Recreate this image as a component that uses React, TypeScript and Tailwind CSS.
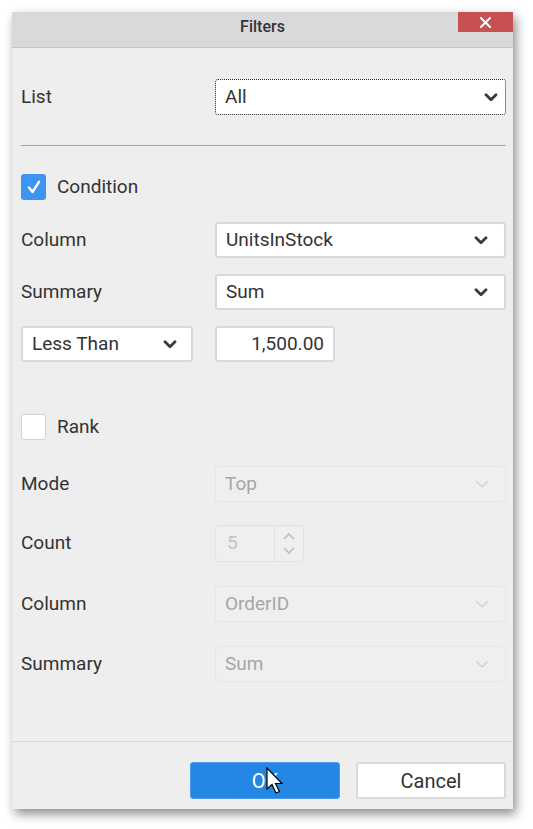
import React from "react";

const Chevron = ({ color = "#3a3a3a", w = 2.6 }: { color?: string; w?: number }) => (
  <svg width="14" height="9" viewBox="0 0 14 9" className="shrink-0">
    <polyline points="2,1.8 7,6.8 12,1.8" fill="none" stroke={color} strokeWidth={w} strokeLinecap="round" strokeLinejoin="round" />
  </svg>
);

const Select = ({ value, disabled = false, focused = false, chevPad = "pr-[16px]" }: { value: string; disabled?: boolean; focused?: boolean; chevPad?: string }) => (
  <div
    className={
      "flex h-[36px] flex-1 items-center justify-between rounded-[3px] pl-[9px] " +
      chevPad +
      " " +
      (focused
        ? "border border-dotted border-[#222] bg-white"
        : disabled
        ? "border border-[#e6e6e6] bg-[#efefef]"
        : "border-2 border-[#d9d9d9] bg-white")
    }
  >
    <span className={disabled ? "text-[#a6a6a6]" : "text-[#333]"}>{value}</span>
    <Chevron color={disabled ? "#d6d6d6" : "#3a3a3a"} w={disabled ? 1.8 : 2.8} />
  </div>
);

const Row = ({ label, children, className = "" }: { label: string; children: React.ReactNode; className?: string }) => (
  <div className={"flex items-center " + className}>
    <div className="w-[194px] shrink-0 text-[#333]">{label}</div>
    {children}
  </div>
);

export default function App() {
  return (
    <div className="h-[829px] w-[533px] bg-white pl-[12px] pt-[12px]" style={{ fontFamily: "Roboto, 'Noto Sans', sans-serif" }}>
      <div className="relative flex h-[797px] w-[501px] flex-col bg-[#eeeeee] text-[19px] shadow-[3px_5px_10px_rgba(0,0,0,0.45)]">
        {/* Title bar */}
        <div className="relative flex h-[36px] shrink-0 items-center justify-center border-b border-[#c4c4c4] bg-[#d9d8da] pb-[6px]">
          <span className="text-[16px] font-medium text-[#333]">Filters</span>
          <div className="absolute right-0 top-0 flex h-[20px] w-[55px] items-center justify-center bg-[#c75050]">
            <svg width="11" height="11" viewBox="0 0 11 11">
              <path d="M1 1 L10 10 M10 1 L1 10" stroke="white" strokeWidth="2" strokeLinecap="square" />
            </svg>
          </div>
        </div>

        {/* Body */}
        <div className="flex flex-1 flex-col pl-[9px] pr-[7px] pt-[31px]">
          <Row label="List">
            <Select value="All" focused chevPad="pr-[7px]" />
          </Row>
          <div className="mt-[30px] h-px bg-[#a3a3a3]" />

          <div className="mt-[28px] flex h-[26px] items-center">
            <div className="flex h-[26px] w-[25px] items-center justify-center rounded-[3px] bg-[#3e94f3]">
              <svg width="14" height="14" viewBox="0 0 14 14">
                <polyline points="2,7.5 5.5,12 12,1.8" fill="none" stroke="white" strokeWidth="2.4" strokeLinecap="round" strokeLinejoin="round" />
              </svg>
            </div>
            <span className="ml-[11px] text-[#333]">Condition</span>
          </div>

          <Row label="Column" className="mt-[22px]">
            <Select value="UnitsInStock" />
          </Row>
          <Row label="Summary" className="mt-[16px]">
            <Select value="Sum" />
          </Row>
          <div className="mt-[16px] flex items-center">
            <div className="flex h-[36px] w-[172px] items-center justify-between rounded-[3px] border-2 border-[#d9d9d9] bg-white pl-[9px] pr-[14px]">
              <span className="text-[#333]">Less Than</span>
              <Chevron w={2.8} />
            </div>
            <div className="ml-[22px] flex h-[36px] w-[120px] items-center justify-end rounded-[3px] border-2 border-[#d9d9d9] bg-white pr-[9px]">
              <span className="text-[#333]">1,500.00</span>
            </div>
          </div>

          <div className="mt-[52px] flex h-[26px] items-center">
            <div className="h-[26px] w-[25px] rounded-[3px] border border-[#d2d2d2] bg-white" />
            <span className="ml-[11px] text-[#333]">Rank</span>
          </div>

          <Row label="Mode" className="mt-[26px]">
            <Select value="Top" disabled />
          </Row>
          <Row label="Count" className="mt-[23px]">
            <div className="flex h-[37px] w-[89px] items-stretch rounded-[3px] border border-[#e3e3e3] bg-[#efefef]">
              <div className="flex flex-1 items-center pl-[11px] text-[#c2c2c2]">5</div>
              <div className="flex w-[29px] flex-col items-center justify-center gap-[7px] border-l border-[#e0e0e0]">
                <svg width="12" height="7" viewBox="0 0 12 7">
                  <polyline points="1,6 6,1 11,6" fill="none" stroke="#bdbdbd" strokeWidth="1.6" />
                </svg>
                <svg width="12" height="7" viewBox="0 0 12 7">
                  <polyline points="1,1 6,6 11,1" fill="none" stroke="#bdbdbd" strokeWidth="1.6" />
                </svg>
              </div>
            </div>
          </Row>
          <Row label="Column" className="mt-[24px]">
            <Select value="OrderID" disabled />
          </Row>
          <Row label="Summary" className="mt-[24px]">
            <Select value="Sum" disabled />
          </Row>
        </div>

        {/* Footer */}
        <div className="flex shrink-0 justify-end gap-[16px] border-t border-[#d6d6d6] pb-[10px] pr-[7px] pt-[20px] text-[20px]">
          <div className="relative flex h-[37px] w-[150px] items-center justify-center rounded-[3px] border border-[#4a9af0] bg-[#2587e4] text-white">
            OK
            <svg className="absolute left-[75px] top-[4px]" width="20" height="28" viewBox="0 0 20 28">
              <path d="M1 1 L1 22 L6 17.5 L10 26 L13.5 24.5 L9.5 16.5 L16 16.5 Z" fill="white" stroke="black" strokeWidth="1.2" strokeLinejoin="miter" />
            </svg>
          </div>
          <div className="flex h-[37px] w-[150px] items-center justify-center rounded-[3px] border-2 border-[#d9d9d9] bg-white text-[#333]">
            Cancel
          </div>
        </div>
      </div>
    </div>
  );
}
